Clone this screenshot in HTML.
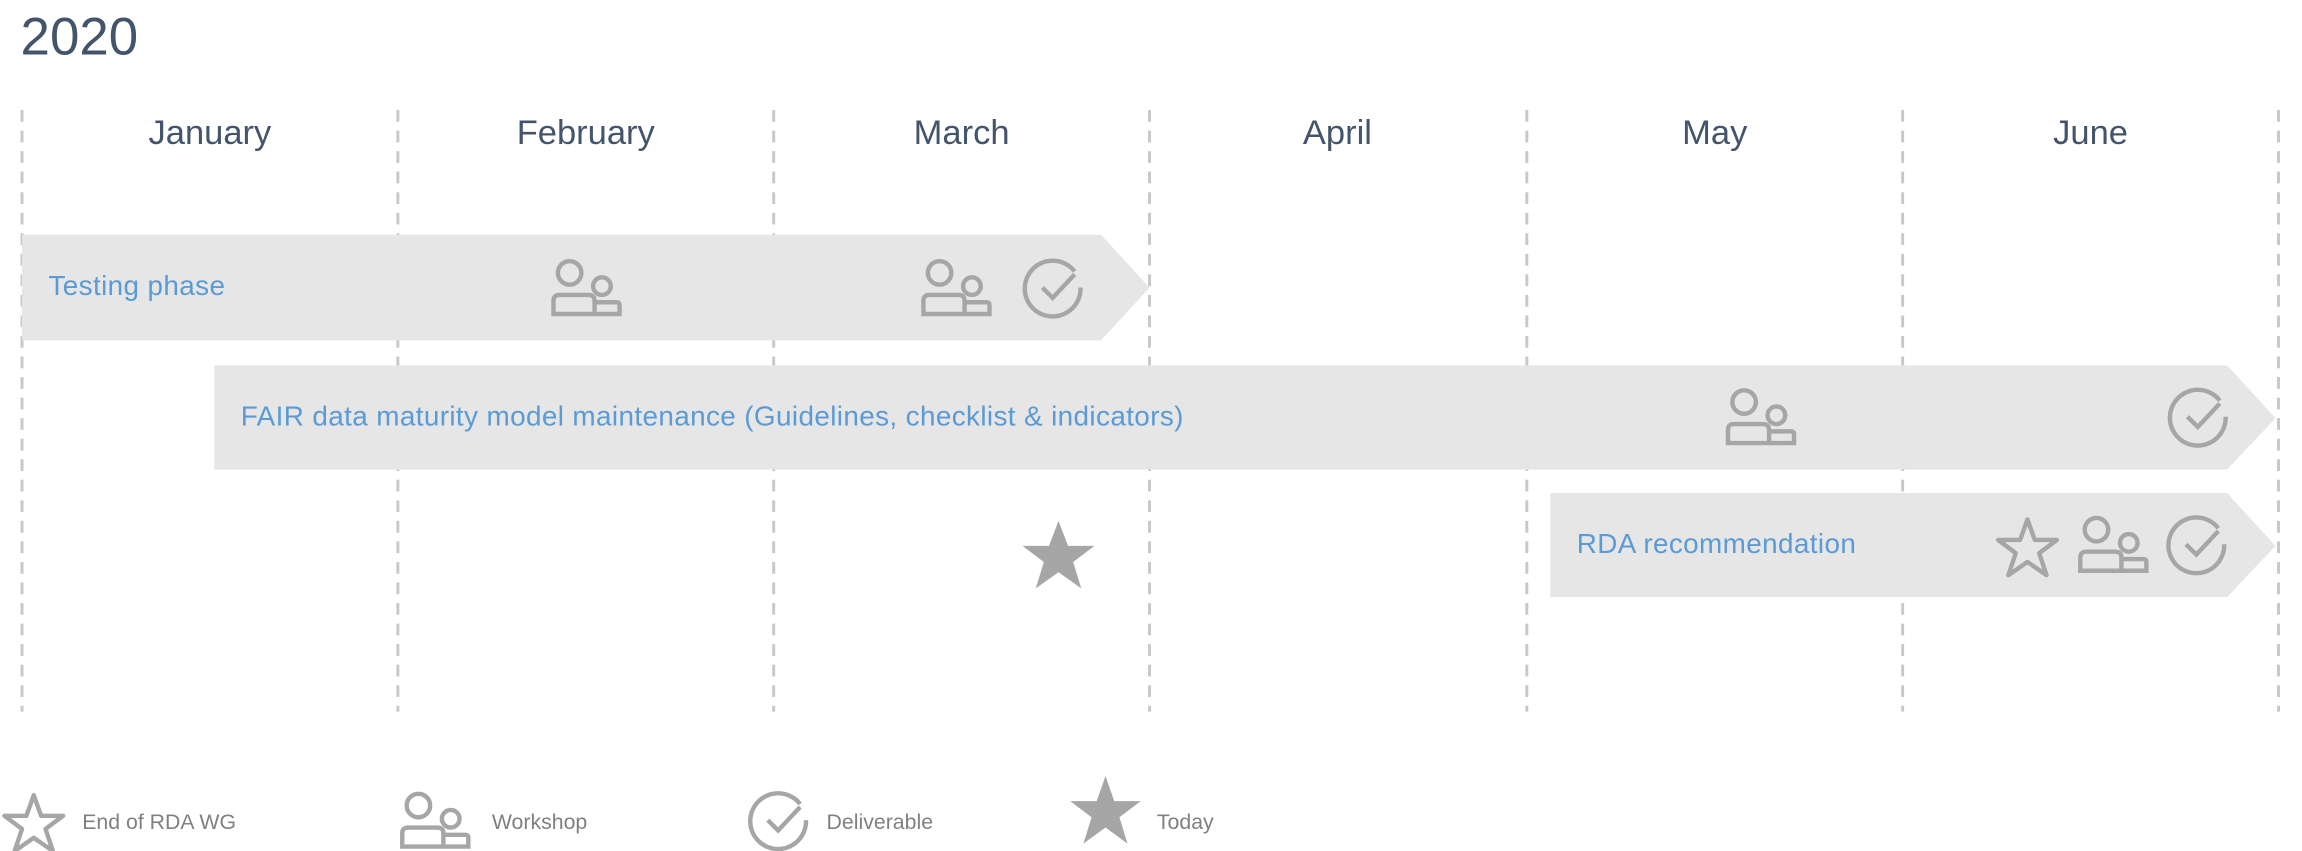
<!DOCTYPE html>
<html><head><meta charset="utf-8"><style>
html,body{margin:0;padding:0;background:#fff;width:2302px;height:851px;overflow:hidden}
#w{position:absolute;left:0;top:0;width:1568px;height:580px;transform:scale(1.46811,1.46724);transform-origin:0 0;font-family:"Liberation Sans",sans-serif}
.t{position:absolute;white-space:nowrap}
.m{font-size:23.5px;color:#44546a;top:77px;width:256px;text-align:center}
.b{font-size:19px;color:#5b9bd5;letter-spacing:0.25px}
.l{font-size:14.5px;color:#808080;top:553px}
</style></head><body><div id="w">
<svg width="1568" height="580" style="position:absolute;left:0;top:0">
<defs>
<g id="pp" fill="none" stroke="#a6a6a6" stroke-width="3">
<circle cx="13" cy="9" r="8"/><circle cx="35" cy="18" r="6"/>
<path d="M2 37V28q0-4 4-4h20q4 0 4 4v9H2zM30 37V31q0-2 2-2h13q2 0 2 2v6H30z"/>
</g>
<g id="ck" fill="none" stroke="#a6a6a6" stroke-width="3">
<path d="M34 9A19 19 0 1 0 38 20"/><path d="M12 20l7 7 15-16"/>
</g>
<g id="st"><path d="M20 2l5 14h15l-12 9 5 15-13-9-13 9 5-15-12-9h15z" fill="none" stroke="#a6a6a6" stroke-width="3" stroke-linejoin="round"/></g>
</defs>
<g stroke="#c8c8c8" stroke-width="2" stroke-dasharray="8,6">
<line x1="15" y1="75" x2="15" y2="485"/><line x1="271" y1="75" x2="271" y2="485"/><line x1="527" y1="75" x2="527" y2="485"/><line x1="783" y1="75" x2="783" y2="485"/><line x1="1040" y1="75" x2="1040" y2="485"/><line x1="1296" y1="75" x2="1296" y2="485"/><line x1="1552" y1="75" x2="1552" y2="485"/>
</g>
<polygon points="15,160 750,160 783,196 750,232 15,232" fill="#e6e6e6"/>
<polygon points="146,249 1517,249 1550,285 1517,320 146,320" fill="#e6e6e6"/>
<polygon points="1056,336 1517,336 1550,372 1517,407 1056,407" fill="#e6e6e6"/>
<use href="#pp" x="375" y="177"/><use href="#pp" x="627" y="177"/><use href="#ck" x="698" y="176"/>
<use href="#pp" x="1175" y="265"/><use href="#ck" x="1478" y="264"/>
<use href="#st" x="1361" y="352"/><use href="#pp" x="1415" y="352"/><use href="#ck" x="1477" y="351"/>
<path d="M721 355l6.5 17h18l-14.5 11 5.5 18-15.5-11-15.5 11 5.5-18-14.5-11h18z" fill="#a6a6a6"/>
<use href="#st" x="3" y="540"/><use href="#pp" x="272" y="540"/><use href="#ck" x="511" y="539"/>
<path d="M753 529l6 17h18l-14.5 11 5.5 18-15-11-15 11 5.5-18-14.5-11h18z" fill="#a6a6a6"/>
</svg>
<div class="t" style="left:14px;top:4px;font-size:36px;color:#44546a">2020</div>
<div class="t m" style="left:15px">January</div>
<div class="t m" style="left:271px">February</div>
<div class="t m" style="left:527px">March</div>
<div class="t m" style="left:783px">April</div>
<div class="t m" style="left:1040px">May</div>
<div class="t m" style="left:1296px">June</div>
<div class="t b" style="left:33px;top:185px">Testing phase</div>
<div class="t b" style="left:164px;top:274px">FAIR data maturity model maintenance (Guidelines, checklist &amp; indicators)</div>
<div class="t b" style="left:1074px;top:361px">RDA recommendation</div>
<div class="t l" style="left:56px">End of RDA WG</div>
<div class="t l" style="left:335px">Workshop</div>
<div class="t l" style="left:563px">Deliverable</div>
<div class="t l" style="left:788px">Today</div>
</div></body></html>
